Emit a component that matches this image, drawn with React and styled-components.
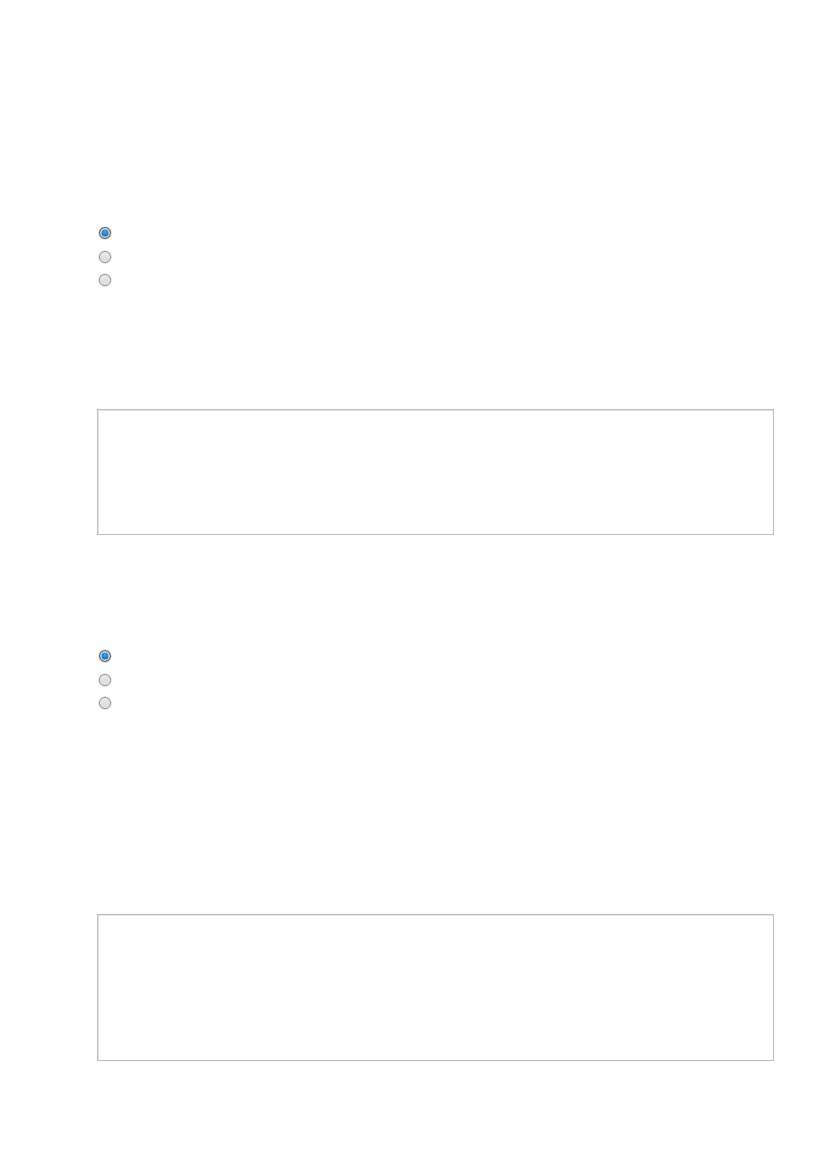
import React from "react";
import styled, { createGlobalStyle } from "styled-components";

const Global = createGlobalStyle`
  html, body { margin: 0; padding: 0; background: #ffffff; }
  body { font-family: "Liberation Sans", Arial, sans-serif; }
`;

const Page = styled.div`
  width: 827px;
  min-height: 1169px;
  box-sizing: border-box;
  padding: 0 53px 0 97px;
  display: flex;
  flex-direction: column;
`;

const RadioGroup = styled.div`
  display: flex;
  flex-direction: column;
  margin-top: ${(p) => p.$top}px;
  padding-left: 2px;
`;

const RadioRow = styled.label`
  height: 23.5px;
  display: flex;
  align-items: center;
`;

const RadioDot = styled.span`
  width: 12px;
  height: 12px;
  box-sizing: border-box;
  border-radius: 50%;
  border: 1px solid ${(p) => (p.$checked ? "#5e5e5e" : "#8c8c8c")};
  background: ${(p) =>
    p.$checked
      ? "radial-gradient(circle at 50% 40%, #4aa3e6 0%, #1571bd 50%, #0a4a82 100%)"
      : "linear-gradient(180deg, #e9e9e9 0%, #d9d9d9 100%)"};
  box-shadow: ${(p) =>
    p.$checked
      ? "inset 0 0 0 1.5px #e4e4e4, 0 0 0 0.6px #c8c8c8"
      : "inset 0 0 0 1px #f7f7f7, 0 0 0 0.6px #d0d0d0"};
`;

const TextBox = styled.div`
  margin-top: ${(p) => p.$top}px;
  height: ${(p) => p.$height}px;
  width: 677px;
  box-sizing: border-box;
  border: 1px solid #bdbdbd;
  box-shadow: inset 1px 1px 0 #e6e6e6;
  background: #ffffff;
`;

function Radios({ top }) {
  return (
    <RadioGroup $top={top}>
      {[true, false, false].map((c, i) => (
        <RadioRow key={i}>
          <RadioDot $checked={c} />
        </RadioRow>
      ))}
    </RadioGroup>
  );
}

export default function App() {
  return (
    <>
      <Global />
      <Page>
        <Radios top={221.25} />
        <TextBox $top={117.25} $height={126} />
        <Radios top={109.25} />
        <TextBox $top={198.75} $height={147} />
      </Page>
    </>
  );
}
